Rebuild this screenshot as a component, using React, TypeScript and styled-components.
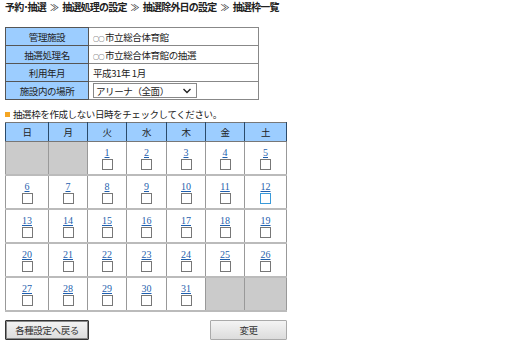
import styled, { createGlobalStyle } from 'styled-components'

const GlobalStyle = createGlobalStyle`
  html, body {
    margin: 0;
    padding: 0;
    background: #fff;
  }
  body {
    font-family: "Noto Sans CJK JP", "DejaVu Sans", sans-serif;
    font-size: 9.5px;
    letter-spacing: -0.4px;
    color: #222;
  }
`

const info = [
  { label: '管理施設', value: '市立総合体育館' },
  { label: '抽選処理名', value: '市立総合体育館の抽選' },
  { label: '利用年月', value: '平成31年 1月', plain: true },
]

const weekdays = ['日', '月', '火', '水', '木', '金', '土']

// 2019年1月: 1日は火曜日
const weeks: (number | null)[][] = (() => {
  const cells: (number | null)[] = [null, null]
  for (let d = 1; d <= 31; d++) cells.push(d)
  while (cells.length % 7) cells.push(null)
  const rows = []
  for (let i = 0; i < cells.length; i += 7) rows.push(cells.slice(i, i + 7))
  return rows
})()

export default function App() {
  return (
    <>
      <GlobalStyle />
      <Page>
        <Breadcrumb>
          予約･抽選<Sep>≫</Sep>抽選処理の設定<Sep>≫</Sep>抽選除外日の設定<Sep>≫</Sep>抽選枠一覧
        </Breadcrumb>

        <InfoTable>
          <tbody>
            {info.map((row) => (
              <tr key={row.label}>
                <InfoLabel>{row.label}</InfoLabel>
                <InfoValue>
                  {!row.plain && <Circles>○○</Circles>}
                  {row.value}
                </InfoValue>
              </tr>
            ))}
            <tr>
              <InfoLabel>施設内の場所</InfoLabel>
              <InfoValue>
                <Select>
                  <span>アリーナ（全面）</span>
                  <svg width="10" height="8" viewBox="0 0 10 8">
                    <path d="M1.5 2 L5 5.5 L8.5 2" fill="none" stroke="#222" strokeWidth="1.4" />
                  </svg>
                </Select>
              </InfoValue>
            </tr>
          </tbody>
        </InfoTable>

        <Notice>
          <Bullet />
          抽選枠を作成しない日時をチェックしてください。
        </Notice>

        <Calendar>
          <colgroup>
            <col style={{ width: 43 }} />
            <col style={{ width: 39 }} />
            <col style={{ width: 39 }} />
            <col style={{ width: 40 }} />
            <col style={{ width: 39 }} />
            <col style={{ width: 39 }} />
            <col style={{ width: 42 }} />
          </colgroup>
          <thead>
            <tr>
              {weekdays.map((w) => (
                <HeadCell key={w}>{w}</HeadCell>
              ))}
            </tr>
          </thead>
          <tbody>
            {weeks.map((week, i) => (
              <tr key={i}>
                {week.map((day, j) =>
                  day === null ? (
                    <DayCell key={j} $empty />
                  ) : (
                    <DayCell key={j}>
                      <DayLink href="#">{day}</DayLink>
                      <Check $hover={day === 12} />
                    </DayCell>
                  )
                )}
              </tr>
            ))}
          </tbody>
        </Calendar>

        <ButtonRow>
          <Button $primary>各種設定へ戻る</Button>
          <Button $width={77}>変更</Button>
        </ButtonRow>
      </Page>
    </>
  )
}

const Page = styled.div`
  display: flex;
  flex-direction: column;
  align-items: flex-start;
  padding: 0 5px;
`

const Breadcrumb = styled.div`
  font-weight: 700;
  font-size: 10px;
  line-height: 13px;
  letter-spacing: -0.8px;
`

const Sep = styled.span`
  font-weight: 400;
  font-size: 9px;
  padding: 0 4px;
`

const Circles = styled.span`
  font-size: 6px;
  letter-spacing: -0.5px;
  margin-right: 1px;
`

const InfoTable = styled.table`
  margin-top: 13px;
  width: 254px;
  border-collapse: collapse;
  border: 1px solid #555;
`

const InfoLabel = styled.th`
  width: 82px;
  height: 17px;
  padding: 0;
  background: #9ccdff;
  border: 1px solid #555;
  font-weight: 400;
  text-align: center;
`

const InfoValue = styled.td`
  padding: 0 0 0 4px;
  border: 1px solid #888;
  background: #fff;
`

const Select = styled.div`
  display: flex;
  align-items: center;
  justify-content: space-between;
  width: 96px;
  height: 13px;
  padding: 0 4px 0 2px;
  border: 1px solid #888;
  background: #fff;
`

const Notice = styled.div`
  display: flex;
  align-items: center;
  gap: 3px;
  margin-top: 7px;
  line-height: 14px;
`

const Bullet = styled.span`
  width: 5px;
  height: 5px;
  background: #f5a623;
`

const Calendar = styled.table`
  margin-top: 1px;
  width: 282px;
  border-collapse: collapse;
  border: 1px solid #999;
  table-layout: fixed;
`

const HeadCell = styled.th`
  height: 18px;
  padding: 0;
  background: #9ccdff;
  border: 1px solid #777;
  border-left-color: #2a4a6a;
  border-right-color: #2a4a6a;
  font-weight: 400;
  text-align: center;
`

const DayCell = styled.td<{ $empty?: boolean }>`
  height: 32px;
  padding: 0;
  border: 1px solid #999;
  border-bottom: 2px solid #bbb;
  background: ${(p) => (p.$empty ? '#cbcbcb' : '#fff')};
  text-align: center;
  vertical-align: middle;
`

const DayLink = styled.a`
  display: block;
  font-family: "Liberation Serif", serif;
  font-size: 10px;
  letter-spacing: 0;
  line-height: 11px;
  color: #1f5fae;
  text-decoration: underline;
`

const Check = styled.span<{ $hover?: boolean }>`
  display: block;
  width: 9px;
  height: 9px;
  margin: 1px auto 0;
  border: 1px solid ${(p) => (p.$hover ? '#3a9ad9' : '#777')};
  background: #fff;
`

const ButtonRow = styled.div`
  display: flex;
  justify-content: space-between;
  width: 282px;
  margin-top: 8px;
`

const Button = styled.button<{ $primary?: boolean; $width?: number }>`
  width: ${(p) => p.$width ?? 84}px;
  height: 20px;
  padding: 0;
  font-family: "Noto Sans CJK JP", sans-serif;
  font-size: 9.5px;
  letter-spacing: -0.4px;
  color: #333;
  background: linear-gradient(#f4f4f4, #dcdcdc);
  border: 1px solid ${(p) => (p.$primary ? '#333' : '#aaa')};
  box-shadow: ${(p) => (p.$primary ? 'inset 0 0 0 1px #888' : 'none')};
  border-radius: 1px;
`
